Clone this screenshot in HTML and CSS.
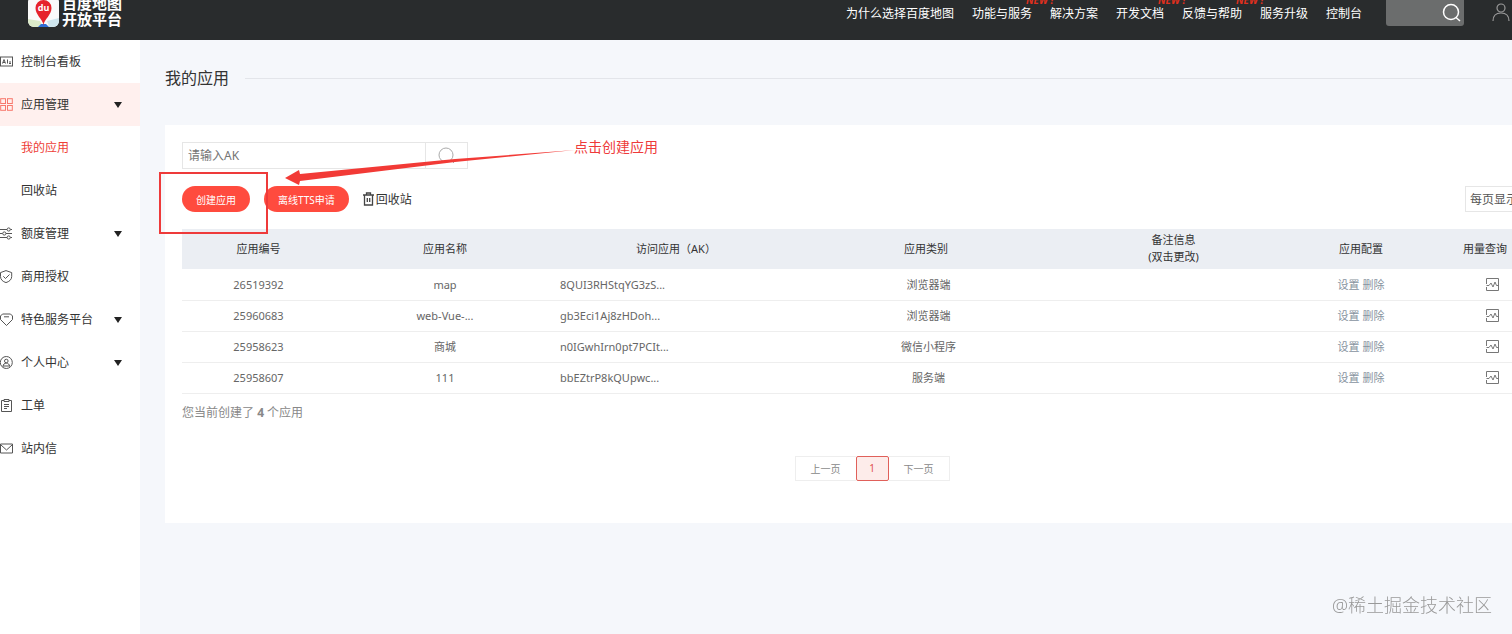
FILE: index.html
```html
<!DOCTYPE html>
<html lang="zh-CN">
<head>
    <meta charset="UTF-8">
    <meta name="viewport" content="width=device-width, initial-scale=1.0">
    <title>我的应用 - 百度地图开放平台</title>
    <link rel="stylesheet" href="styles.css">
</head>
<body>
<div class="page">

    <header class="header">
        <a class="logo" href="#">
            <svg class="logo-icon" viewBox="0 0 31 31" width="31" height="31">
                <defs>
                    <clipPath id="tile"><rect width="31" height="31" rx="6"/></clipPath>
                </defs>
                <g clip-path="url(#tile)">
                    <rect width="31" height="31" fill="#fafafa"/>
                    <path d="M0 23l12 2 3 6H0z" fill="#dcebc9"/>
                    <path d="M19 25l12-3v9H21z" fill="#cfe6ee"/>
                    <path d="M10 31l3-3h5l3 3z" fill="#2f6fd6"/>
                    <path d="M15.500 29c-1-6-8-10-8-17a8 8 0 0 1 16 0c0 7-7 11-8 17z" fill="#e6232b"/>
                </g>
                <text class="logo-du" x="15.500" y="15" text-anchor="middle">du</text>
            </svg>
            <span class="logo-text">百度地图<br>开放平台</span>
        </a>
        <nav class="nav">
            <a href="#">为什么选择百度地图</a>
            <a href="#">功能与服务<em class="new">NEW !</em></a>
            <a href="#">解决方案</a>
            <a href="#">开发文档<em class="new">NEW !</em></a>
            <a href="#">反馈与帮助<em class="new">NEW !</em></a>
            <a href="#">服务升级</a>
            <a href="#">控制台</a>
        </nav>
        <button class="header-search" type="button" aria-label="搜索">
            <svg viewBox="0 0 20 20" width="20" height="20" fill="none" stroke="#fff" stroke-width="1.5">
                <circle cx="9" cy="9" r="7.5"/>
                <path d="M14 14.500l4 3.500"/>
            </svg>
        </button>
        <a class="user" href="#" aria-label="用户">
            <svg viewBox="0 0 18 18" width="18" height="18" fill="none" stroke="#9a9a9a" stroke-width="1.2">
                <circle cx="9" cy="5" r="4"/>
                <path d="M1 18c0-5 3-8 8-8s8 3 8 8"/>
            </svg>
        </a>
    </header>

    <div class="layout">
        <aside class="sidebar">
            <a class="item" href="#">
                <svg class="icon" viewBox="0 0 13 13"><rect x=".5" y="2" width="12" height="9"/><path d="M2.500 8.500l1.500-4 1.500 4M3 7.500h2M7.500 4.500v4M9 8.500h2M10 6v2.500"/></svg>
                <span>控制台看板</span>
            </a>
            <a class="item active" href="#">
                <svg class="icon" viewBox="0 0 13 13"><rect x=".7" y=".7" width="4.800" height="4.800"/><rect x="7.500" y=".7" width="4.800" height="4.800"/><rect x=".7" y="7.500" width="4.800" height="4.800"/><rect x="7.500" y="7.500" width="4.800" height="4.800"/></svg>
                <span>应用管理</span><i class="caret"></i>
            </a>
            <a class="item sub current" href="#">我的应用</a>
            <a class="item sub" href="#">回收站</a>
            <a class="item" href="#">
                <svg class="icon" viewBox="0 0 13 13"><path d="M0 2.500h7M10.500 2.500H12M0 6.500h2.500M6 6.500h6M0 10.500h7M10.500 10.500H12"/><circle cx="8.700" cy="2.500" r="1.600"/><circle cx="4.300" cy="6.500" r="1.600"/><circle cx="8.700" cy="10.500" r="1.600"/></svg>
                <span>额度管理</span><i class="caret"></i>
            </a>
            <a class="item" href="#">
                <svg class="icon" viewBox="0 0 13 13"><path d="M6 .6l5.700 2v4c0 3-2.500 5-5.700 6-3.200-1-5.500-3-5.500-6v-4zM3.300 6.300l2.200 2.200 4-4"/></svg>
                <span>商用授权</span>
            </a>
            <a class="item" href="#">
                <svg class="icon" viewBox="0 0 13 13"><path d="M2.500 1h8l2 2v3.500l-6 6-6-6V3zM4 3.800h5"/></svg>
                <span>特色服务平台</span><i class="caret"></i>
            </a>
            <a class="item" href="#">
                <svg class="icon" viewBox="0 0 13 13"><circle cx="6.300" cy="6.500" r="6"/><circle cx="6.300" cy="5" r="1.800"/><path d="M3 10.500c0-4.500 6.600-4.500 6.600 0M3 10h6.600"/></svg>
                <span>个人中心</span><i class="caret"></i>
            </a>
            <a class="item" href="#">
                <svg class="icon" viewBox="0 0 13 13"><path d="M4 1.500H1.500v11h10v-11H9M4 .5h5v2H4zM4 5.500h5M4 7.500h5M4 9.500h3"/></svg>
                <span>工单</span>
            </a>
            <a class="item" href="#">
                <svg class="icon" viewBox="0 0 13 13"><path d="M.5 2h12v9H.5zM1 3l5.500 5L12 3"/></svg>
                <span>站内信</span>
            </a>
        </aside>

        <main class="main">
            <h1 class="title">我的应用</h1>

            <section class="panel">
                <form class="search">
                    <input type="text" placeholder="请输入AK" aria-label="请输入AK">
                    <button type="button" aria-label="查询">
                        <svg viewBox="0 0 18 18" width="18" height="18" fill="none" stroke="#aaa"><circle cx="8" cy="8" r="7"/><path d="M13 13l3 3"/></svg>
                    </button>
                </form>

                <div class="toolbar">
                    <button class="btn" type="button">创建应用</button>
                    <button class="btn" type="button">离线TTS申请</button>
                    <a class="recycle" href="#">
                        <svg viewBox="0 0 13 14" width="13" height="14" fill="none" stroke="#444" stroke-width="1.300"><path d="M0 3h11M3.500 3V1h4v2M1.500 3v10h8V3M4.300 6v4M6.700 6v4"/></svg>
                        回收站
                    </a>
                    <select class="page-size" aria-label="每页显示">
                        <option>每页显示10条</option>
                        <option>每页显示20条</option>
                    </select>
                </div>

                <table class="apps">
                    <colgroup>
                        <col class="col-id"><col class="col-name"><col class="col-ak"><col class="col-type">
                        <col class="col-note"><col class="col-config"><col class="col-usage">
                    </colgroup>
                    <thead>
                        <tr>
                            <th>应用编号</th>
                            <th>应用名称</th>
                            <th>访问应用（AK）</th>
                            <th>应用类别</th>
                            <th>备注信息<br>(双击更改)</th>
                            <th>应用配置</th>
                            <th class="usage-head">用量查询</th>
                        </tr>
                    </thead>
                    <tbody>
                        <tr>
                            <td>26519392</td><td>map</td><td class="ak">8QUI3RHStqYG3zS...</td><td class="type">浏览器端</td><td></td>
                            <td><a href="#">设置</a> <a href="#">删除</a></td>
                            <td class="usage"><svg class="chart" viewBox="0 0 13 13"><path d="M.5 6V.5h12v12H.5V9M.5 7.500H3L5 5l2 4 2-5 1.500 3.500h2"/></svg></td>
                        </tr>
                        <tr>
                            <td>25960683</td><td>web-Vue-...</td><td class="ak">gb3Eci1Aj8zHDoh...</td><td class="type">浏览器端</td><td></td>
                            <td><a href="#">设置</a> <a href="#">删除</a></td>
                            <td class="usage"><svg class="chart" viewBox="0 0 13 13"><path d="M.5 6V.5h12v12H.5V9M.5 7.500H3L5 5l2 4 2-5 1.500 3.500h2"/></svg></td>
                        </tr>
                        <tr>
                            <td>25958623</td><td>商城</td><td class="ak">n0IGwhIrn0pt7PCIt...</td><td class="type">微信小程序</td><td></td>
                            <td><a href="#">设置</a> <a href="#">删除</a></td>
                            <td class="usage"><svg class="chart" viewBox="0 0 13 13"><path d="M.5 6V.5h12v12H.5V9M.5 7.500H3L5 5l2 4 2-5 1.500 3.500h2"/></svg></td>
                        </tr>
                        <tr>
                            <td>25958607</td><td>111</td><td class="ak">bbEZtrP8kQUpwc...</td><td class="type">服务端</td><td></td>
                            <td><a href="#">设置</a> <a href="#">删除</a></td>
                            <td class="usage"><svg class="chart" viewBox="0 0 13 13"><path d="M.5 6V.5h12v12H.5V9M.5 7.500H3L5 5l2 4 2-5 1.500 3.500h2"/></svg></td>
                        </tr>
                    </tbody>
                </table>

                <p class="summary">您当前创建了 <b>4</b> 个应用</p>

                <div class="pager">
                    <button type="button">上一页</button>
                    <button type="button" class="on">1</button>
                    <button type="button">下一页</button>
                </div>

                <!-- callout on the create button -->
                <div class="mark-box"></div>
                <svg class="mark-arrow" viewBox="0 0 292 36" width="292" height="36"><path d="M0 28L14 20l1 4L170 9 290 0 170 12 15 31l-1 4z" fill="#f23a36"/></svg>
                <span class="mark-text">点击创建应用</span>
            </section>
        </main>
    </div>
</div>
<div class="watermark">@稀土掘金技术社区</div>
</body>
</html>
```
FILE: styles.css
```css
* {
    box-sizing: border-box;
}

body {
    margin: 0;
    min-height: 100vh;
    overflow: hidden;
    background: #f5f7fb;
    color: #333;
    font-family: "Noto Sans", "Noto Sans CJK SC", sans-serif;
    font-size: 12px;
    line-height: 17px;
}

a {
    color: inherit;
    text-decoration: none;
}

button, input, select {
    font-family: inherit;
    font-size: 12px;
    margin: 0;
}

/* the console is wider than the window */
.page {
    display: flex;
    flex-direction: column;
    min-height: 100vh;
    margin-right: -84px;
}

/* header */
.header {
    display: flex;
    align-items: flex-start;
    height: 40px;
    padding: 0 86px 0 28px;
    overflow: hidden;
    background: #292c2d;
    color: #fff;
}

.logo {
    display: flex;
    align-items: center;
    gap: 3px;
    margin-top: -5px;
}

.logo-du {
    fill: #fff;
    font-size: 9px;
    font-weight: bold;
}

.logo-text {
    font-size: 15px;
    font-weight: bold;
    line-height: 16px;
}

.nav {
    display: flex;
    gap: 18px;
    margin-left: auto;
    line-height: 28px;
}

.nav a {
    position: relative;
    white-space: nowrap;
}

.new {
    position: absolute;
    top: -6px;
    right: -26px;
    width: 32px;
    color: #e0301e;
    font-size: 10px;
    font-weight: bold;
    line-height: 12px;
}

.header-search {
    display: flex;
    align-items: center;
    justify-content: flex-end;
    width: 78px;
    height: 26px;
    margin: 0 28px 0 24px;
    padding: 0 2px;
    border: 0;
    border-radius: 0 0 3px 3px;
    background: #6b6d6d;
}

.user {
    padding-top: 3px;
}

.layout {
    display: flex;
    flex: 1;
}

/* sidebar */
.sidebar {
    flex: 0 0 140px;
    background: #fff;
}

.item {
    display: flex;
    align-items: center;
    gap: 8px;
    height: 43px;
    padding-right: 18px;
}

.icon, .chart {
    width: 13px;
    height: 13px;
    fill: none;
    stroke: #555;
    stroke-width: 1;
}

.active {
    background: #fff0ee;
}

.active .icon {
    stroke: #f8786c;
}

.sub {
    padding-left: 21px;
}

.current {
    color: #ee4038;
}

.caret {
    margin-left: auto;
    border: 4px solid transparent;
    border-top: 6px solid #222;
    border-bottom: 0;
}

/* content */
.main {
    flex: 1;
    padding: 26px 17px 0 25px;
}

.title {
    display: flex;
    align-items: center;
    gap: 16px;
    margin: 0 0 35px;
    font-size: 16px;
    font-weight: normal;
    line-height: 24px;
}

.title::after {
    content: "";
    flex: 1;
    height: 1px;
    background: #e3e5ea;
}

.panel {
    position: relative;
    padding: 17px 17px 42px;
    background: #fff;
}

.search {
    display: flex;
    height: 27px;
}

.search input {
    width: 244px;
    padding: 0 5px;
    border: 1px solid #e6e6e6;
    outline: 0;
}

.search input::placeholder {
    color: #757575;
}

.search button {
    width: 42px;
    padding: 0;
    border: 1px solid #e6e6e6;
    border-left: 0;
    background: #fff;
}

.search svg {
    display: block;
    margin: 0 auto;
}

.toolbar {
    display: flex;
    align-items: center;
    gap: 14px;
    margin: 17px 0;
}

.btn {
    height: 26px;
    padding: 0 14px;
    border: 0;
    border-radius: 13px;
    background: #ff4b3e;
    color: #fff;
    font-size: 10px;
}

.recycle {
    display: flex;
    align-items: center;
}

.page-size {
    width: 97px;
    height: 26px;
    margin-left: auto;
    padding: 0 4px;
    border: 1px solid #e6e6e6;
    background: #fff;
    color: #555;
    appearance: none;
}

.apps {
    width: 100%;
    table-layout: fixed;
    border-collapse: collapse;
    font-size: 11px;
    text-align: center;
}

.col-id { width: 153px; }
.col-name { width: 220px; }
.col-ak { width: 242px; }
.col-type { width: 258px; }
.col-note { width: 237px; }
.col-config { width: 138px; }
.col-usage { width: 132px; }

.apps th {
    height: 40px;
    padding: 0 0 2px;
    background: #ebeef3;
    font-weight: normal;
}

.apps td {
    height: 31px;
    padding: 0;
    border-bottom: 1px solid #eee;
    color: #666;
}

.apps td a {
    color: #8793a0;
}

.apps .ak {
    padding-left: 5px;
    text-align: left;
}

.apps .type {
    padding-left: 5px;
}

.apps .usage-head {
    padding-right: 22px;
}

.apps .usage {
    padding-right: 8px;
}

.chart {
    display: block;
    margin: 0 auto;
    stroke: #777;
}

.summary {
    margin: 10px 0 35px;
    color: #888;
}

.pager {
    display: flex;
    justify-content: center;
}

.pager button {
    height: 25px;
    padding: 0 15px;
    border: 1px solid #eee;
    background: #fff;
    color: #888;
    font-size: 10px;
}

.pager button:first-child {
    border-right: 0;
}

.pager button:last-child {
    border-left: 0;
}

.pager .on {
    width: 33px;
    padding: 0;
    border: 1px solid #e0605a;
    border-radius: 2px;
    background: #fdecea;
    color: #e0504a;
}

/* callout */
.mark-box {
    position: absolute;
    top: 47px;
    left: -6px;
    width: 109px;
    height: 62px;
    border: 2px solid #ee3a3a;
}

.mark-arrow {
    position: absolute;
    top: 25px;
    left: 120px;
}

.mark-text {
    position: absolute;
    top: 13px;
    left: 409px;
    color: #ee3a3a;
    font-size: 14px;
}

.watermark {
    position: fixed;
    right: 20px;
    bottom: 17px;
    color: #999;
    font-size: 18px;
    font-weight: 300;
    line-height: 24px;
}
```
